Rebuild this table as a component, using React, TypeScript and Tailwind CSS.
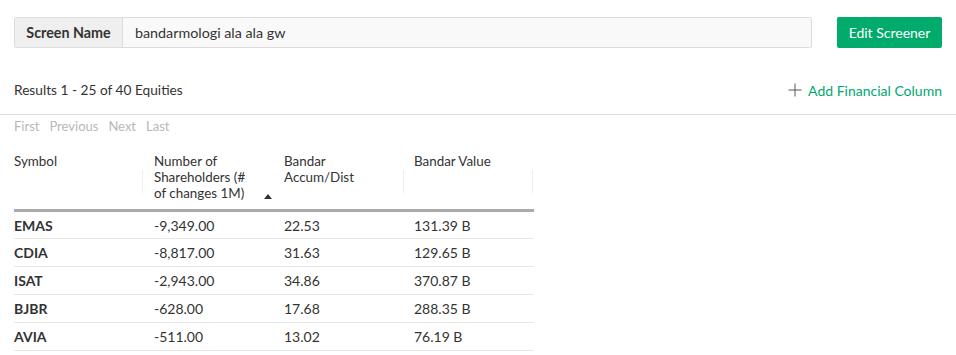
import React from "react";

const rows = [
  ["EMAS", "-9,349.00", "22.53", "131.39 B"],
  ["CDIA", "-8,817.00", "31.63", "129.65 B"],
  ["ISAT", "-2,943.00", "34.86", "370.87 B"],
  ["BJBR", "-628.00", "17.68", "288.35 B"],
  ["AVIA", "-511.00", "13.02", "76.19 B"],
];

export default function App() {
  return (
    <div
      className="w-[956px] h-[355px] overflow-hidden bg-white text-[#333] text-[14px]"
      style={{ fontFamily: "Lato, 'Open Sans', Arial, sans-serif" }}
    >
      <div className="flex items-stretch gap-[25px] px-[14px] pt-[17px]">
        <div className="flex flex-1 h-[31px] border border-[#dcdcdc] rounded-[2px] overflow-hidden">
          <div className="flex items-center justify-center w-[108px] bg-[#efefef] border-r border-[#dcdcdc] font-bold text-[14.3px] text-[#333]">
            Screen Name
          </div>
          <div className="flex items-center flex-1 bg-[#f9f9f9] pl-[12px] text-[14.3px] text-[#333]">
            bandarmologi ala ala gw
          </div>
        </div>
        <button className="w-[105px] h-[31px] bg-[#00ab6b] text-white rounded-[2px] text-[14px]">
          Edit Screener
        </button>
      </div>

      <div className="flex items-center justify-between h-[20px] mt-[32px] px-[14px]">
        <span className="text-[13.7px]">Results 1 - 25 of 40 Equities</span>
        <span className="flex items-center gap-[6px] text-[#00a870]">
          <svg width="14" height="14" viewBox="0 0 14 14">
            <path d="M7 0.5V13.5M0.5 7H13.5" stroke="#555" strokeWidth="1" fill="none" />
          </svg>
          Add Financial Column
        </span>
      </div>
      <div className="mt-[14px] border-b border-[#dddddd]" />

      <div className="flex gap-[10px] px-[14px] h-[23px] pt-[1px] items-center text-[#b8b8b8] text-[13px]">
        <span>First</span>
        <span>Previous</span>
        <span>Next</span>
        <span>Last</span>
      </div>

      <div className="px-[14px] mt-[7px]">
        <table className="w-[520px] border-collapse table-fixed text-[13.4px]">
          <thead>
            <tr className="border-b-[3px] border-[#aaaaaa] align-top">
              <th className="relative w-[130px] text-left font-normal pt-[8px] pb-[8px] leading-[16px]">
                Symbol
                <span className="absolute right-[1px] top-[25px] h-[23px] border-r border-[#eeeeee]" />
              </th>
              <th className="relative w-[130px] text-left font-normal pt-[8px] pb-[8px] pl-[10px] leading-[16px]">
                Number of
                <br />
                Shareholders (#
                <br />
                of changes 1M)
                <svg
                  className="absolute left-[120px] top-[49px]"
                  width="8"
                  height="5"
                  viewBox="0 0 8 5"
                >
                  <path d="M4 0L8 5H0Z" fill="#333" />
                </svg>
              </th>
              <th className="relative w-[130px] text-left font-normal pt-[8px] pb-[8px] pl-[10px] leading-[16px]">
                Bandar
                <br />
                Accum/Dist
              </th>
              <th className="relative w-[130px] text-left font-normal pt-[8px] pb-[8px] pl-[10px] leading-[16px]">
                Bandar Value
                <span className="absolute left-[-1px] top-[25px] h-[23px] border-l border-[#eeeeee]" />
                <span className="absolute right-[1px] top-[25px] h-[23px] border-r border-[#eeeeee]" />
              </th>
            </tr>
          </thead>
          <tbody className="text-[14px]">
            {rows.map((r) => (
              <tr key={r[0]} className="border-b border-[#e8e8e8] h-[28px]">
                <td className="font-bold">{r[0]}</td>
                <td className="pl-[10px]">{r[1]}</td>
                <td className="pl-[10px]">{r[2]}</td>
                <td className="pl-[10px]">{r[3]}</td>
              </tr>
            ))}
          </tbody>
        </table>
      </div>
    </div>
  );
}
